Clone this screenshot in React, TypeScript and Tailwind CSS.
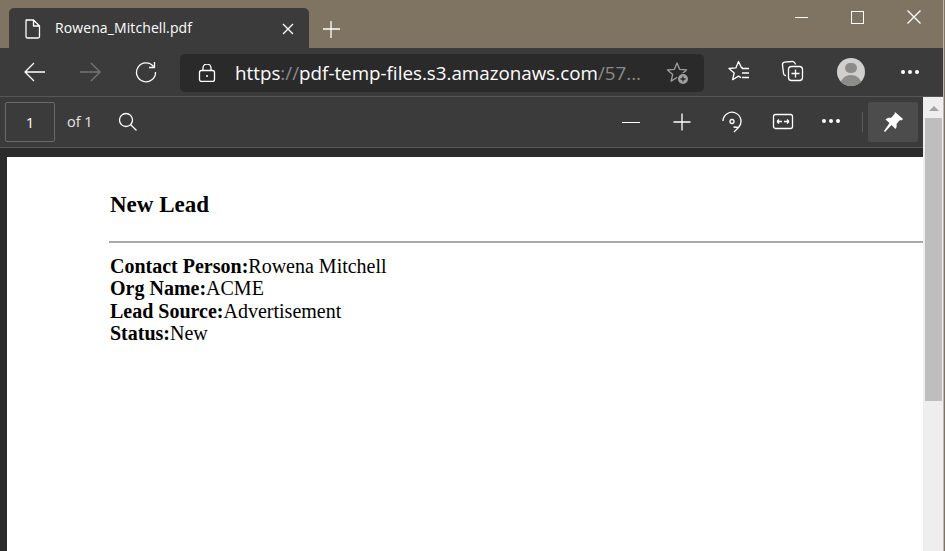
import type { ReactNode } from 'react';

function Icon({ size = 24, className, children }: { size?: number; className?: string; children: ReactNode }) {
  return (
    <svg
      width={size}
      height={size}
      viewBox={`0 0 ${size} ${size}`}
      fill="none"
      stroke="currentColor"
      strokeWidth="1.3"
      strokeLinejoin="round"
      className={className}
    >
      {children}
    </svg>
  );
}

function Dots() {
  return (
    <div className="flex gap-[3px]">
      <div className="h-[4px] w-[4px] rounded-full bg-white" />
      <div className="h-[4px] w-[4px] rounded-full bg-white" />
      <div className="h-[4px] w-[4px] rounded-full bg-white" />
    </div>
  );
}

function TitleBar() {
  return (
    <div className="flex h-[48px] bg-[#7f7461] text-white">
      <div className="ml-[9px] mt-[8px] flex h-[40px] w-[300px] items-center rounded-t-[5px] bg-[#3b3b3b]">
        <Icon size={20} className="ml-[14px] mt-[1px]">
          <path d="M3 1h7.500l6 6v10.500a1.500 1.500 0 0 1-1.500 1.500h-10.500a1.500 1.500 0 0 1-1.500-1.500v-15a1.500 1.500 0 0 1 1.500-1.500z M10.500 1v6h6" />
        </Icon>
        <span className="ml-[12px] mt-[-1px] w-[227px] text-[14px] leading-[20px] tracking-[0.1px] font-['Open_Sans',sans-serif]">
          Rowena_Mitchell.pdf
        </span>
        <Icon size={12} className="mt-[1px]">
          <path d="M1 1l10 10M11 1l-10 10" />
        </Icon>
      </div>
      <Icon size={18} className="ml-[13px] mt-[20px]">
        <path d="M9 1v17M1 9h17" />
      </Icon>
      <div className="ml-auto mr-[22px] mt-[10px] flex h-[14px] items-center gap-[43px]">
        <div className="h-px w-[13px] bg-white" />
        <div className="h-[13px] w-[13px] border border-white" />
        <Icon size={14}>
          <path d="M0.500 0.500l13 13M13.500 0.500l-13 13" />
        </Icon>
      </div>
    </div>
  );
}

function NavBar() {
  return (
    <div className="flex h-[48px] items-center bg-[#3b3b3b] text-white">
      <Icon size={22} className="ml-[24px]">
        <path d="M1 11h20M10 2l-9 9 9 9" />
      </Icon>
      <Icon size={22} className="ml-[33px] text-[#757575]">
        <path d="M1 11h20M12 2l9 9-9 9" />
      </Icon>
      <Icon size={22} className="ml-[34px]">
        <path d="M18.500 5.500a9.500 9.500 0 1 0 2 5.500M19.500 1v5.500h-5.500" />
      </Icon>
      <div className="ml-[23px] mt-[1px] flex h-[38px] w-[524px] items-center rounded-[5px] bg-[#2a2a2a]">
        <Icon size={18} className="ml-[18px]">
          <rect x="1.500" y="6.500" width="15" height="11" rx="2" />
          <path d="M5 6.500v-2.500a4 4 0 0 1 8 0v2.500" />
          <circle cx="9" cy="12" r="1" fill="currentColor" stroke="none" />
        </Icon>
        <span className="ml-[19px] w-[431px] whitespace-nowrap text-[18.800px] leading-[24px] font-['Open_Sans',sans-serif]">
          https<span className="text-[#8a8a8a]">://</span>pdf-temp-files.s3.amazonaws.com<span className="text-[#8a8a8a]">/57...</span>
        </span>
        <Icon size={24} className="text-[#a0a0a0]">
          <path d="M11 2l2.600 6.300 6.900 .6-5.200 4.500 1.600 6.700-5.900-3.600-5.900 3.600 1.600-6.700-5.200-4.500 6.900-.6z" />
          <circle cx="17" cy="18" r="6" fill="#2a2a2a" stroke="none" />
          <circle cx="17" cy="18" r="5" fill="#a0a0a0" stroke="none" />
          <path d="M14.500 18h5M17 15.500v5" stroke="#2a2a2a" />
        </Icon>
      </div>
      <Icon size={24} className="ml-[24px]">
        <path d="M15 8l-1.400-.1-3.100-6.400-2.600 6.400-6.900.6 5.200 4.500-1.600 6.700 5.900-3.600 2.500 1.500" />
        <path d="M14 8.500h7M14 13h7M14 17.500h7" />
      </Icon>
      <Icon size={24} className="ml-[29px]">
        <path d="M5 15.500h-.500a2.500 2.500 0 0 1-2-2.300l-1-8.200a2.500 2.500 0 0 1 2-2.800l7-.7a3.500 3.500 0 0 1 4 3" />
        <rect x="7.500" y="6.500" width="14" height="14" rx="3" />
        <path d="M14.500 9.500v8M10.500 13.500h8" />
      </Icon>
      <div className="ml-[32px] flex h-[28px] w-[28px] flex-col items-center overflow-hidden rounded-full bg-[#d0cfcd]">
        <div className="mt-[5px] h-[12px] w-[12px] rounded-full bg-[#8e8c8a]" />
        <div className="mt-[2px] h-[14px] w-[22px] rounded-t-full bg-[#8e8c8a]" />
      </div>
      <div className="ml-[36px]">
        <Dots />
      </div>
    </div>
  );
}

function PdfToolbar() {
  return (
    <div className="flex h-[52px] items-center border-y border-[#565656] bg-[#3b3b3b] text-white">
      <div className="ml-[5px] flex h-[40px] w-[50px] items-center justify-center rounded-[2px] border border-[#6b6b6b] text-[15px] font-['Open_Sans',sans-serif]">
        1
      </div>
      <span className="ml-[12px] w-[25px] whitespace-nowrap text-[14.500px] text-[#e6e6e6] font-['Open_Sans',sans-serif]">of 1</span>
      <Icon size={20} className="ml-[26px]">
        <circle cx="8" cy="8" r="6.500" />
        <path d="M12.500 12.500l6 6" />
      </Icon>
      <div className="ml-[484px] h-px w-[18px] bg-white" />
      <Icon size={18} className="ml-[33px]">
        <path d="M9 0.500v17M0.500 9h17" />
      </Icon>
      <Icon size={22} className="ml-[30px]">
        <path d="M2 10a9 9 0 1 1 15.500 6.500" />
        <circle cx="11" cy="10.500" r="2" />
        <path d="M13 21l4.500-4.500-5-.5" />
      </Icon>
      <Icon size={22} className="ml-[29px]">
        <rect x="1.500" y="3.500" width="19" height="14" rx="2" />
        <path d="M5 10.500h5M5 10.500l2-2M5 10.500l2 2M12 10.500h5M17 10.500l-2-2M17 10.500l-2 2" />
      </Icon>
      <div className="ml-[28px] mb-[3px]">
        <Dots />
      </div>
      <div className="ml-[22px] h-[20px] w-px bg-[#5c5c5c]" />
      <div className="ml-[5px] flex h-[40px] w-[50px] items-center justify-center rounded-[2px] bg-[#4c4c4c]">
        <svg width="22" height="22" viewBox="0 0 22 22" fill="#fff">
          <path d="M13 1l8 7-1.500 1.500-1.500-.5-3.500 4c.5 2 0 4-1 5l-4-4-6.500 7-1-1 5.500-8-4-3.500c1.500-1.500 3.500-2 5.500-1.500l3.500-4z" />
        </svg>
      </div>
    </div>
  );
}

function PdfPage() {
  return (
    <div className="flex-1 overflow-hidden bg-white pl-[102px] pt-[34px] text-black font-['Liberation_Serif',serif]">
      <h1 className="ml-px text-[23px] font-bold leading-[27px]">New Lead</h1>
      <hr className="mt-[23px] border-t-2 border-[#a9a9a9]" />
      <div className="ml-px mt-[12px] text-[20px] leading-[22.400px]">
        <div><b>Contact Person:</b>Rowena Mitchell</div>
        <div><b>Org Name:</b>ACME</div>
        <div><b>Lead Source:</b>Advertisement</div>
        <div><b>Status:</b>New</div>
      </div>
    </div>
  );
}

function Scrollbar() {
  return (
    <div className="flex w-[20px] flex-col border-t border-[#565656] bg-[#eeeeee] pl-[2px]">
      <div className="ml-[4px] mt-[9px] h-0 w-0 border-x-[5px] border-b-[5px] border-x-transparent border-b-[#a3a3a3]" />
      <div className="mt-[7px] h-[283px] w-[17px] bg-[#bebebe]" />
    </div>
  );
}

export default function App() {
  return (
    <div className="flex h-[551px] w-[945px] overflow-hidden bg-[#7f7461]">
      <div className="flex w-[943px] flex-col bg-[#2b2b2b]">
        <TitleBar />
        <NavBar />
        <div className="flex min-h-0 flex-1">
          <div className="flex min-w-0 flex-1 flex-col">
            <PdfToolbar />
            <div className="h-[9px] bg-[#2b2b2b]" />
            <div className="flex min-h-0 flex-1 pl-[7px]">
              <PdfPage />
            </div>
          </div>
          <Scrollbar />
        </div>
      </div>
      <div className="w-px bg-[#bdb9b0]" />
      <div className="w-px bg-[#7f7461]" />
    </div>
  );
}
